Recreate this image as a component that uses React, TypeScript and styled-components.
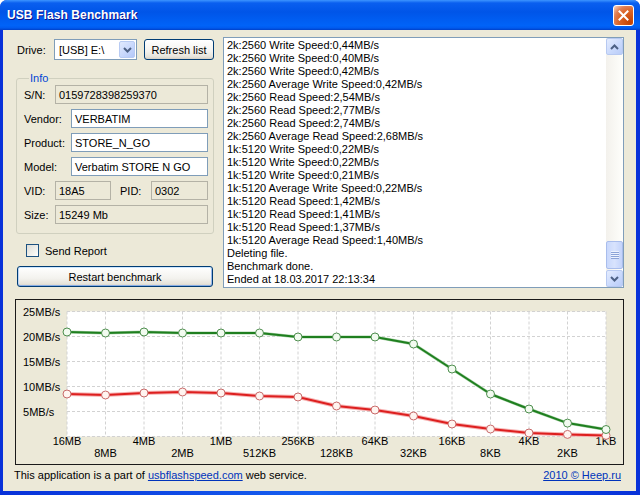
import React from "react";
import styled, { createGlobalStyle } from "styled-components";

const GlobalStyle = createGlobalStyle`
  html, body {
    margin: 0;
    padding: 0;
    background: #ffffff;
  }
  body {
    font-family: "Liberation Sans", Arial, sans-serif;
    font-size: 11px;
    color: #000;
  }
  * {
    box-sizing: border-box;
  }
`;

/* ---------- window chrome ---------- */

const Window = styled.div`
  width: 640px;
  height: 495px;
  display: flex;
  flex-direction: column;
  background: linear-gradient(90deg, #0831d9, #1660f0 50%, #0831d9);
  border-radius: 7px 7px 0 0;
  overflow: hidden;
`;

const TitleBar = styled.div`
  height: 30px;
  flex: none;
  display: flex;
  align-items: center;
  justify-content: space-between;
  padding: 0 6px 0 7px;
  background: linear-gradient(
    180deg,
    #3d95ff 0%,
    #0a5fef 10%,
    #0055e8 40%,
    #0063f8 85%,
    #005bf0 93%,
    #0040c8 100%
  );
`;

const Title = styled.span`
  color: #fff;
  font-weight: bold;
  font-size: 12px;
  letter-spacing: 0.1px;
  text-shadow: 1px 1px #0f1089;
`;

const CloseButton = styled.div`
  width: 21px;
  height: 21px;
  margin-top: 1px;
  border: 1px solid #fff;
  border-radius: 3px;
  display: flex;
  align-items: center;
  justify-content: center;
  background: radial-gradient(
    circle at 85% 85%,
    #c44200 0%,
    #dc6527 50%,
    #e08056 72%,
    #f7c8b0 95%
  );
`;

const Client = styled.div`
  flex: 1;
  margin: 0 4px 4px 3px;
  background: #ece9d8;
  padding: 7px 12px 0 13px;
  display: flex;
  flex-direction: column;
`;

/* ---------- top area ---------- */

const TopArea = styled.div`
  display: flex;
  gap: 9px;
  height: 251px;
`;

const LeftPanel = styled.div`
  width: 198px;
  flex: none;
  display: flex;
  flex-direction: column;
`;

const DriveRow = styled.div`
  display: flex;
  align-items: center;
  height: 21px;
  margin-top: 2px;
`;

const DriveLabel = styled.span`
  width: 38px;
  padding-left: 1px;
`;

const Combo = styled.div`
  width: 83px;
  height: 21px;
  border: 1px solid #7f9db9;
  background: #fff;
  display: flex;
  align-items: center;
  padding: 1px;
`;

const ComboText = styled.span`
  flex: 1;
  padding-left: 3px;
  white-space: nowrap;
`;

const ComboArrow = styled.div`
  width: 16px;
  height: 17px;
  border: 1px solid #b8cbf3;
  border-radius: 2px;
  background: linear-gradient(135deg, #e1eafe 0%, #c6d6fc 60%, #b3c7f8 100%);
  display: flex;
  align-items: center;
  justify-content: center;
`;

const Button = styled.div<{ $default?: boolean; $width: number }>`
  width: ${(p) => p.$width}px;
  height: 21px;
  border: 1px solid #003c74;
  border-radius: 3px;
  background: linear-gradient(180deg, #ffffff 0%, #f3f2ee 60%, #e6e3da 88%, #d6d0c5 100%);
  display: flex;
  align-items: center;
  justify-content: center;
  white-space: nowrap;
  box-shadow: ${(p) =>
    p.$default
      ? "inset 0 -1px #89ade4, inset 0 1px #cee7ff, inset 1px 0 #bcd4f6, inset -1px 0 #98b8ea"
      : "none"};
`;

const RefreshButton = styled(Button)`
  margin-left: 7px;
`;

const Group = styled.fieldset`
  margin: 12px 0 0 0;
  padding: 0 5px 9px 7px;
  border: 1px solid #d0d0bf;
  border-radius: 3px;
  display: flex;
  flex-direction: column;
  gap: 5px;
`;

const Legend = styled.legend`
  color: #0046d5;
  padding: 0 1px;
  margin-left: 5px;
  line-height: 13px;
`;

const FieldRow = styled.div`
  display: flex;
  align-items: center;
  height: 19px;
`;

const FieldLabel = styled.span<{ $width: number; $indent?: number }>`
  width: ${(p) => p.$width}px;
  margin-left: ${(p) => p.$indent ?? 0}px;
  flex: none;
  white-space: nowrap;
`;

const Field = styled.div<{ $readOnly?: boolean; $width?: number }>`
  height: 19px;
  ${(p) => (p.$width ? `width: ${p.$width}px; flex: none;` : "flex: 1;")}
  border: 1px solid ${(p) => (p.$readOnly ? "#b4b2a6" : "#7f9db9")};
  background: ${(p) => (p.$readOnly ? "#ece9d8" : "#ffffff")};
  padding: 0 3px;
  display: flex;
  align-items: center;
  white-space: nowrap;
  overflow: hidden;
`;

const CheckRow = styled.div`
  display: flex;
  align-items: center;
  margin: 10px 0 0 10px;
  height: 13px;
`;

const CheckBox = styled.div`
  width: 13px;
  height: 13px;
  border: 1px solid #1c5180;
  background: linear-gradient(135deg, #dcdcd7 0%, #f4f4f0 70%, #ffffff 100%);
`;

const CheckLabel = styled.span`
  margin-left: 6px;
`;

const RestartButton = styled(Button)`
  margin: 9px 0 0 1px;
`;

/* ---------- log list ---------- */

const LogBox = styled.div`
  flex: 1;
  border: 1px solid #7f9db9;
  background: #fff;
  display: flex;
  overflow: hidden;
`;

const LogLines = styled.div`
  flex: 1;
  padding: 1px 3px;
  line-height: 13px;
  overflow: hidden;
  white-space: nowrap;
`;

const ScrollBar = styled.div`
  width: 17px;
  flex: none;
  display: flex;
  flex-direction: column;
  background: linear-gradient(90deg, #f3f1ec, #fefefb);
`;

const ScrollButton = styled.div`
  height: 17px;
  flex: none;
  border: 1px solid #b7c9f1;
  border-radius: 2px;
  background: linear-gradient(135deg, #e4ecfe 0%, #c8d8fc 60%, #b9ccf8 100%);
  display: flex;
  align-items: center;
  justify-content: center;
`;

const Track = styled.div`
  flex: 1;
  display: flex;
  flex-direction: column;
  justify-content: flex-end;
  padding-bottom: 1px;
`;

const Thumb = styled.div`
  height: 28px;
  border: 1px solid #a9bdec;
  border-radius: 2px;
  background: linear-gradient(90deg, #c9d8fc 0%, #d8e3fd 50%, #c3d3fb 100%);
  display: flex;
  align-items: center;
  justify-content: center;
`;

/* ---------- chart ---------- */

const ChartFrame = styled.div`
  margin: 11px 0 0 -1px;
  width: 609px;
  height: 166px;
  border: 1px solid #1a1a1a;
  background: #ece9d8;
`;

const Footer = styled.div`
  display: flex;
  justify-content: space-between;
  line-height: 13px;
  margin: 4px 3px 0 -2px;
`;

const Link = styled.a`
  color: #0033bb;
  text-decoration: underline;
`;

/* ---------- data ---------- */

const logLines = [
  "2k:2560 Write Speed:0,44MB/s",
  "2k:2560 Write Speed:0,40MB/s",
  "2k:2560 Write Speed:0,42MB/s",
  "2k:2560 Average Write Speed:0,42MB/s",
  "2k:2560 Read Speed:2,54MB/s",
  "2k:2560 Read Speed:2,77MB/s",
  "2k:2560 Read Speed:2,74MB/s",
  "2k:2560 Average Read Speed:2,68MB/s",
  "1k:5120 Write Speed:0,22MB/s",
  "1k:5120 Write Speed:0,22MB/s",
  "1k:5120 Write Speed:0,21MB/s",
  "1k:5120 Average Write Speed:0,22MB/s",
  "1k:5120 Read Speed:1,42MB/s",
  "1k:5120 Read Speed:1,41MB/s",
  "1k:5120 Read Speed:1,37MB/s",
  "1k:5120 Average Read Speed:1,40MB/s",
  "Deleting file.",
  "Benchmark done.",
  "Ended at 18.03.2017 22:13:34",
];

const sizes = [
  "16MB", "8MB", "4MB", "2MB", "1MB", "512KB", "256KB", "128KB",
  "64KB", "32KB", "16KB", "8KB", "4KB", "2KB", "1KB",
];
const readSpeeds = [20.9, 20.7, 20.9, 20.7, 20.7, 20.7, 19.9, 19.9, 19.9, 18.5, 13.5, 8.5, 5.5, 2.68, 1.4];
const writeSpeeds = [8.5, 8.3, 8.7, 8.9, 8.7, 8.1, 7.9, 6.1, 5.3, 4.1, 2.5, 1.5, 0.7, 0.42, 0.22];

const X0 = 51;
const XSTEP = 38.5;
const Y0 = 136.5;
const YSCALE = 5;
const px = (i: number) => X0 + i * XSTEP;
const py = (v: number) => Y0 - v * YSCALE;

function Chevron({ up }: { up?: boolean }) {
  return (
    <svg width="9" height="6" viewBox="0 0 9 6">
      <polyline
        points={up ? "1,5 4.5,1.5 8,5" : "1,1 4.5,4.5 8,1"}
        fill="none"
        stroke="#4d6185"
        strokeWidth="2"
      />
    </svg>
  );
}

function Grip() {
  return (
    <svg width="8" height="8" viewBox="0 0 8 8">
      {[0.5, 2.5, 4.5, 6.5].map((y) => (
        <line key={y} x1="0" y1={y} x2="8" y2={y} stroke="#eef3fe" strokeWidth="1" />
      ))}
      {[1.5, 3.5, 5.5, 7.5].map((y) => (
        <line key={y} x1="0" y1={y} x2="8" y2={y} stroke="#8ca4d8" strokeWidth="1" />
      ))}
    </svg>
  );
}

function SpeedChart() {
  const readPts = readSpeeds.map((v, i) => `${px(i)},${py(v)}`).join(" ");
  const writePts = writeSpeeds.map((v, i) => `${px(i)},${py(v)}`).join(" ");
  const last = px(sizes.length - 1);
  return (
    <svg width="607" height="164" viewBox="0 0 607 164" fontFamily='"Liberation Sans", Arial, sans-serif' fontSize="11">
      <rect x={X0} y={py(25)} width={last - X0} height={25 * YSCALE} fill="#ffffff" />
      {[0, 5, 10, 15, 20, 25].map((v) => (
        <line key={v} x1={X0} x2={last} y1={py(v)} y2={py(v)} stroke="#d2d2d2" strokeDasharray="3 2" />
      ))}
      {sizes.map((s, i) => (
        <line key={s} x1={px(i)} x2={px(i)} y1={py(25)} y2={Y0} stroke="#d2d2d2" strokeDasharray="3 2" />
      ))}
      {[25, 20, 15, 10, 5].map((v) => (
        <text key={v} x="7" y={py(v) + 4} fill="#000">
          {v}MB/s
        </text>
      ))}
      {sizes.map((s, i) => (
        <text key={s} x={px(i)} y={i % 2 === 0 ? 145 : 157} textAnchor="middle" fill="#000">
          {s}
        </text>
      ))}
      <polyline points={writePts} fill="none" stroke="#f6b4b4" strokeWidth="4" strokeLinejoin="round" />
      <polyline points={writePts} fill="none" stroke="#dd1f1f" strokeWidth="2" strokeLinejoin="round" />
      <polyline points={readPts} fill="none" stroke="#a9d3a9" strokeWidth="3" strokeLinejoin="round" />
      <polyline points={readPts} fill="none" stroke="#1f7f1f" strokeWidth="2" strokeLinejoin="round" />
      {writeSpeeds.map((v, i) => (
        <circle key={`w${i}`} cx={px(i)} cy={py(v)} r="4" fill="#fff4f0" stroke="#c86a6a" strokeWidth="1" />
      ))}
      {readSpeeds.map((v, i) => (
        <circle key={`r${i}`} cx={px(i)} cy={py(v)} r="4" fill="#f2fbf0" stroke="#4f8f4f" strokeWidth="1" />
      ))}
    </svg>
  );
}

export default function App() {
  return (
    <>
      <GlobalStyle />
      <Window>
        <TitleBar>
          <Title>USB Flash Benchmark</Title>
          <CloseButton>
            <svg width="11" height="11" viewBox="0 0 11 11">
              <path d="M1.5 1.5 L9.5 9.5 M9.5 1.5 L1.5 9.5" stroke="#fff" strokeWidth="2" strokeLinecap="square" />
            </svg>
          </CloseButton>
        </TitleBar>
        <Client>
          <TopArea>
            <LeftPanel>
              <DriveRow>
                <DriveLabel>Drive:</DriveLabel>
                <Combo>
                  <ComboText>[USB] E:\</ComboText>
                  <ComboArrow>
                    <Chevron />
                  </ComboArrow>
                </Combo>
                <RefreshButton $width={70}>Refresh list</RefreshButton>
              </DriveRow>
              <Group>
                <Legend>Info</Legend>
                <FieldRow>
                  <FieldLabel $width={31}>S/N:</FieldLabel>
                  <Field $readOnly>0159728398259370</Field>
                </FieldRow>
                <FieldRow>
                  <FieldLabel $width={47}>Vendor:</FieldLabel>
                  <Field>VERBATIM</Field>
                </FieldRow>
                <FieldRow>
                  <FieldLabel $width={47}>Product:</FieldLabel>
                  <Field>STORE_N_GO</Field>
                </FieldRow>
                <FieldRow>
                  <FieldLabel $width={47}>Model:</FieldLabel>
                  <Field>Verbatim STORE N GO</Field>
                </FieldRow>
                <FieldRow>
                  <FieldLabel $width={31}>VID:</FieldLabel>
                  <Field $readOnly $width={56}>18A5</Field>
                  <FieldLabel $width={31} $indent={9}>PID:</FieldLabel>
                  <Field $readOnly>0302</Field>
                </FieldRow>
                <FieldRow>
                  <FieldLabel $width={31}>Size:</FieldLabel>
                  <Field $readOnly>15249 Mb</Field>
                </FieldRow>
              </Group>
              <CheckRow>
                <CheckBox />
                <CheckLabel>Send Report</CheckLabel>
              </CheckRow>
              <RestartButton $width={196} $default>
                Restart benchmark
              </RestartButton>
            </LeftPanel>
            <LogBox>
              <LogLines>
                {logLines.map((line, i) => (
                  <div key={i}>{line}</div>
                ))}
              </LogLines>
              <ScrollBar>
                <ScrollButton>
                  <Chevron up />
                </ScrollButton>
                <Track>
                  <Thumb>
                    <Grip />
                  </Thumb>
                </Track>
                <ScrollButton>
                  <Chevron />
                </ScrollButton>
              </ScrollBar>
            </LogBox>
          </TopArea>
          <ChartFrame>
            <SpeedChart />
          </ChartFrame>
          <Footer>
            <span>
              This application is a part of <Link href="#">usbflashspeed.com</Link> web service.
            </span>
            <Link href="#">2010 © Heep.ru</Link>
          </Footer>
        </Client>
      </Window>
    </>
  );
}
